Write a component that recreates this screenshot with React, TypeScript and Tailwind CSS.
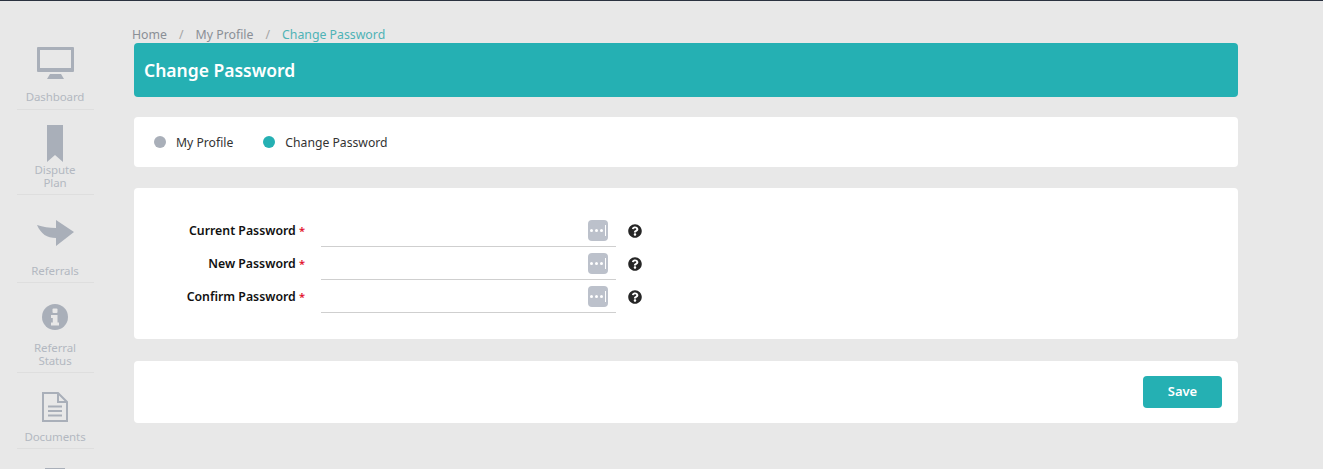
import type { ReactNode } from "react";
import { FaQuestionCircle } from "react-icons/fa";

const font = { fontFamily: '"Noto Sans", sans-serif' };

const Monitor = () => (
  <svg width="37" height="33" viewBox="0 0 37 33" fill="#a9afb9">
    <path fillRule="evenodd" d="M1 0h35a1 1 0 0 1 1 1v23a1 1 0 0 1-1 1H1a1 1 0 0 1-1-1V1a1 1 0 0 1 1-1zM3 3v18h31V3z" />
    <path d="M3 21h31v1H3z" opacity="0.35" />
    <path d="M13 27h11l3 5H10z" />
  </svg>
);

const Bookmark = () => (
  <svg width="16" height="37" viewBox="0 0 16 37" fill="#a9afb9">
    <path d="M0 0h16v37l-8-7-8 7z" />
  </svg>
);

const Arrow = () => (
  <svg width="37" height="27" viewBox="0 0 37 27" fill="#a9afb9">
    <path d="M0 5c6 2 12 3 19 3V0l18 12-18 14v-8C10 18 4 14 0 5z" />
  </svg>
);

const Info = () => (
  <svg width="26" height="26" viewBox="0 0 26 26">
    <circle cx="13" cy="13" r="13" fill="#a9afb9" />
    <rect x="10.5" y="4.5" width="5" height="4.5" rx="1" fill="#e8e8e8" />
    <path d="M9 11h6.5v7.5H17V21.5H9v-3h1.8v-4.5H9z" fill="#e8e8e8" />
  </svg>
);

const Doc = () => (
  <svg width="26" height="30" viewBox="0 0 26 30" fill="none" stroke="#a9afb9">
    <path d="M1 1h15l9 9v19H1z" strokeWidth="2" />
    <path d="M16 1v9h9" strokeWidth="2" />
    <path d="M6 14.500h14M6 19h14M6 23.500h14" strokeWidth="2" />
  </svg>
);

const NavItem = ({
  icon,
  lines,
  iconHeight,
  gap,
  padding = "pb-[5px]",
}: {
  icon: ReactNode;
  lines: string[];
  iconHeight: string;
  gap: string;
  padding?: string;
}) => (
  <div className={`flex w-[77px] flex-col items-center border-b border-[#dedede] ${padding}`}>
    <div className={`flex items-center justify-center ${iconHeight}`}>{icon}</div>
    <div className={`text-center text-[11.500px] leading-[13px] tracking-[-0.1px] text-[#b3b8c1] ${gap}`}>
      {lines.map((l) => (
        <div key={l}>{l}</div>
      ))}
    </div>
  </div>
);

const Sidebar = () => (
  <aside className="flex w-[110px] shrink-0 flex-col items-center pt-[46px]">
    <NavItem icon={<Monitor />} lines={["Dashboard"]} iconHeight="h-[33px]" gap="mt-[10px]" padding="pb-[6px]" />
    <div className="mt-[15px]">
      <NavItem icon={<Bookmark />} lines={["Dispute", "Plan"]} iconHeight="h-[37px]" gap="mt-[1px]" />
    </div>
    <div className="mt-[25px]">
      <NavItem icon={<Arrow />} lines={["Referrals"]} iconHeight="h-[27px]" gap="mt-[17px]" />
    </div>
    <div className="mt-[21px]">
      <NavItem icon={<Info />} lines={["Referral", "Status"]} iconHeight="h-[26px]" gap="mt-[11px]" />
    </div>
    <div className="mt-[19px]">
      <NavItem icon={<Doc />} lines={["Documents"]} iconHeight="h-[30px]" gap="mt-[8px]" />
    </div>
    <div className="mt-[19px] h-[10px] w-[20px] shrink-0 bg-[#a9afb9]" />
  </aside>
);

const PasswordDots = () => (
  <div className="flex h-[21px] w-[20px] items-center justify-center gap-[2px] rounded-[4px] bg-[#bcc1cb]">
    <span className="h-[3px] w-[3px] rounded-full bg-white" />
    <span className="h-[3px] w-[3px] rounded-full bg-white" />
    <span className="h-[3px] w-[3px] rounded-full bg-white" />
    <span className="h-[11px] w-[1px] bg-white" />
  </div>
);

const Field = ({ label }: { label: string }) => (
  <div className="flex h-[33px] items-end">
    <div className="mb-[8px] w-[171px] text-right text-[12.300px] leading-[16px] font-semibold text-[#111]">
      {label} <span className="text-[11px] text-[#e2122c]">*</span>
    </div>
    <div className="ml-[16px] flex h-[33px] w-[295px] items-center justify-end border-b border-[#cfcfcf] pr-[8px]">
      <PasswordDots />
    </div>
    <div className="mb-[9.500px] ml-[12px]">
      <FaQuestionCircle className="text-[14px] text-[#262626]" />
    </div>
  </div>
);

export default function App() {
  return (
    <div
      className="flex h-[469px] w-full overflow-hidden border-t border-[#2b3240] bg-[#e8e8e8]"
      style={font}
    >
      <Sidebar />
      <main className="ml-[24px] w-[1104px]">
        <nav className="ml-[-2px] flex h-[42px] items-end text-[12.300px] leading-[16px] text-[#8a8f96]">
          <div className="flex">
            <span>Home</span>
            <span className="mx-[12px] text-[#a5a5a5]">/</span>
            <span>My Profile</span>
            <span className="mx-[12px] text-[#a5a5a5]">/</span>
            <span className="text-[#4fb3b6]">Change Password</span>
          </div>
        </nav>
        <header className="flex h-[54px] items-center rounded-[4px] bg-[#25b0b3] pl-[10px] text-[17.500px] font-semibold text-white">
          Change Password
        </header>
        <div className="mt-[20px] flex h-[50px] items-center rounded-[4px] bg-white pl-[20px] text-[12.200px] text-[#333]">
          <span className="h-[12px] w-[12px] rounded-full bg-[#a9afb9]" />
          <span className="ml-[10px] translate-y-[1px]">My Profile</span>
          <span className="ml-[30px] h-[12px] w-[12px] rounded-full bg-[#25b0b3]" />
          <span className="ml-[10px] translate-y-[1px]">Change Password</span>
        </div>
        <section className="mt-[21px] h-[151px] rounded-[4px] bg-white pt-[26px]">
          <Field label="Current Password" />
          <Field label="New Password" />
          <Field label="Confirm Password" />
        </section>
        <footer className="mt-[22px] flex h-[62px] items-center justify-end rounded-[4px] bg-white pr-[16px]">
          <button className="h-[32px] w-[79px] rounded-[4px] bg-[#25b0b3] text-[13px] font-semibold text-white">
            Save
          </button>
        </footer>
      </main>
    </div>
  );
}
